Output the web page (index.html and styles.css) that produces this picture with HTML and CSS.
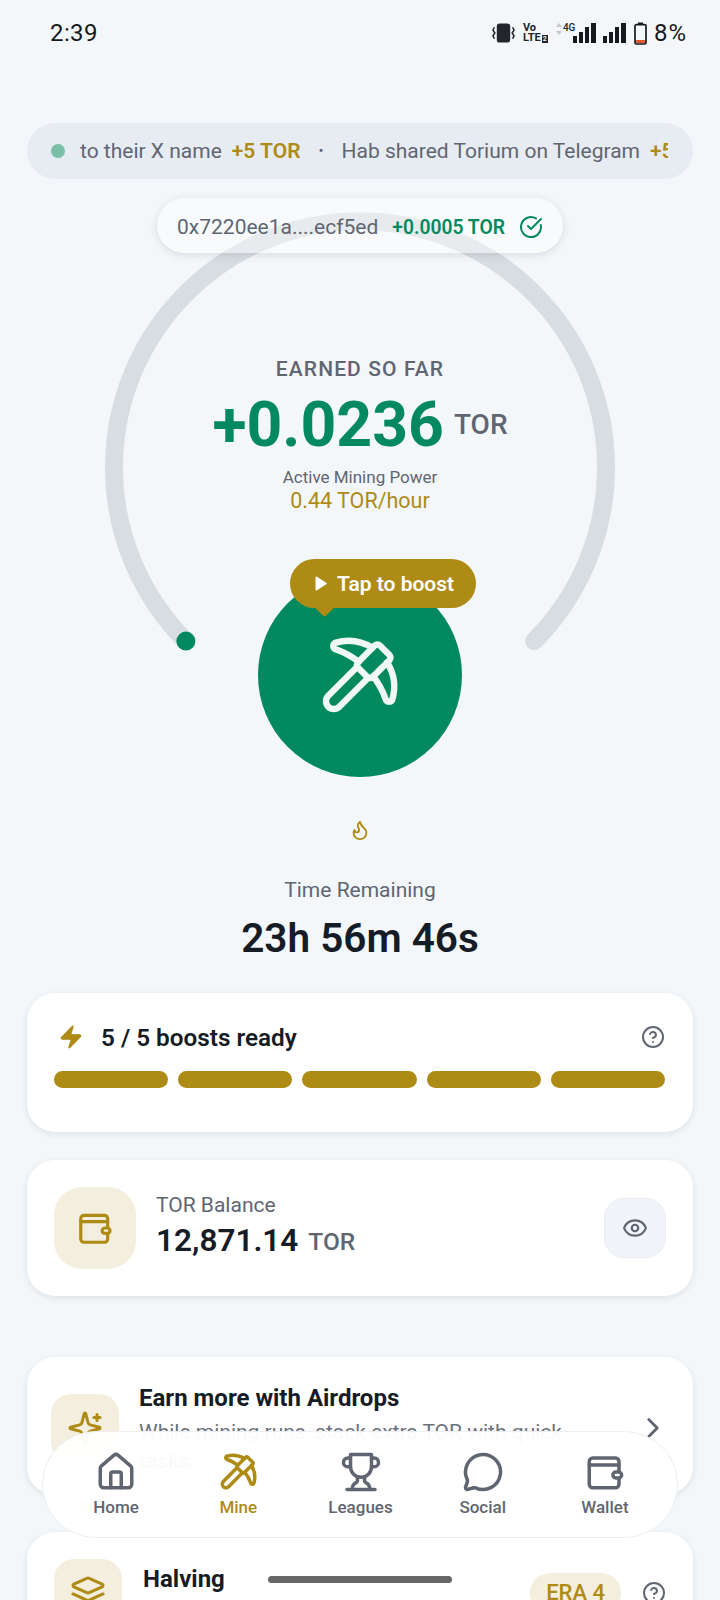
FILE: index.html
```html
<!DOCTYPE html>
<html lang="en">
<head>
    <meta charset="UTF-8">
    <meta name="viewport" content="width=device-width, initial-scale=1.0">
    <title>Mine</title>
    <link rel="stylesheet" href="styles.css">
</head>
<body>
    <div class="screen">
        <div class="status">
            <div class="time">2:39</div>
            <div class="status-icons">
                <svg class="ic-vibrate" viewBox="0 0 24 20" fill="none" stroke="#22262b" stroke-width="1.6">
                    <rect x="5" y="0" width="14" height="20" rx="3" fill="#22262b" stroke="none"/>
                    <path d="M2.5 4 1 7l2 3-2 3 1.5 3"/>
                    <path d="M21.5 4 23 7l-2 3 2 3-1.5 3"/>
                </svg>
                <div class="volte"><span>Vo</span><span>LTE<i>2</i></span></div>
                <div class="net">
                    <svg class="ic-arrows" viewBox="0 0 6 12" fill="#c5c9ce"><path d="M3 0l3 4H0z"/><path d="M3 12 0 8h6z"/></svg>
                    <span class="net-label">4G</span>
                    <svg class="ic-signal" viewBox="0 0 23 20" fill="#16191d"><rect x="0" y="13" width="4" height="7"/><rect x="6" y="9" width="4" height="11"/><rect x="12" y="4" width="4" height="16"/><rect x="18" y="0" width="5" height="20"/></svg>
                </div>
                <svg class="ic-signal second" viewBox="0 0 23 20" fill="#16191d"><rect x="0" y="13" width="4" height="7"/><rect x="6" y="9" width="4" height="11"/><rect x="12" y="4" width="4" height="16"/><rect x="18" y="0" width="5" height="20"/></svg>
                <svg class="ic-battery" viewBox="0 0 13 23" fill="none"><path d="M4 .5h5v2H4z" fill="#16191d"/><rect x="1" y="2.6" width="11" height="19.4" rx="1.5" stroke="#16191d" stroke-width="1.7"/><rect x="2" y="18" width="9" height="3" fill="#e4572e"/></svg>
                <div class="percent">8%</div>
            </div>
        </div>

        <div class="main">
            <div class="ticker">
                <span class="ticker-dot"></span>
                <div class="ticker-track">
                    <span>to their X name</span>
                    <b>+5 TOR</b>
                    <em>•</em>
                    <span>Hab shared Torium on Telegram</span>
                    <b>+5 TOR</b>
                </div>
            </div>

            <div class="hero">
                <svg class="arc" viewBox="0 0 510 510" fill="none">
                    <path d="M80.9 429.1A246 246 0 1 1 429.1 429.1" stroke="#d8dde1" stroke-width="18" stroke-linecap="round"/>
                    <circle cx="80.9" cy="429.1" r="9.5" fill="#028a5e"/>
                </svg>

                <div class="chip">
                    <span class="chip-addr">0x7220ee1a....ecf5ed</span>
                    <span class="chip-amt">+0.0005 TOR</span>
                    <svg class="chip-check" viewBox="0 0 24 24" fill="none" stroke="#028a5e" stroke-width="2" stroke-linecap="round" stroke-linejoin="round"><path d="M21.801 10A10 10 0 1 1 17 3.335"/><path d="m9 11 3 3L22 4"/></svg>
                </div>

                <div class="earned-label">EARNED SO FAR</div>
                <div class="earned-row">
                    <span class="earned-value">+0.0236</span>
                    <span class="earned-unit">TOR</span>
                </div>
                <div class="power-label">Active Mining Power</div>
                <div class="power-rate">0.44 TOR/hour</div>

                <div class="mine-btn">
                    <div class="boost-tip">
                        <svg class="boost-play" viewBox="0 0 24 24" fill="#fff" stroke="#fff" stroke-width="2" stroke-linejoin="round"><polygon points="6 3 20 12 6 21 6 3"/></svg>
                        <span>Tap to boost</span>
                    </div>
                    <svg class="mine-icon" viewBox="0 0 24 24" fill="none" stroke="#eff8f4" stroke-width="1.75" stroke-linecap="round" stroke-linejoin="round">
                        <path d="M14.531 12.469 6.619 20.38a1 1 0 1 1-3-3l7.912-7.912"/>
                        <path d="M15.686 4.314A12.5 12.5 0 0 0 5.461 2.958 1 1 0 0 0 5.58 4.71a22 22 0 0 1 6.318 3.393"/>
                        <path d="M17.7 3.7a1 1 0 0 0-1.4 0l-4.6 4.6a1 1 0 0 0 0 1.4l2.6 2.6a1 1 0 0 0 1.4 0l4.6-4.6a1 1 0 0 0 0-1.4z"/>
                        <path d="M19.686 8.314a12.501 12.501 0 0 1 1.356 10.225 1 1 0 0 1-1.751-.119 22 22 0 0 0-3.393-6.319"/>
                    </svg>
                </div>

                <svg class="flame" viewBox="0 0 24 24" fill="none" stroke="#ae8b14" stroke-width="2" stroke-linecap="round" stroke-linejoin="round"><path d="M8.5 14.5A2.5 2.5 0 0 0 11 12c0-1.38-.5-2-1-3-1.072-2.143-.224-4.054 2-6 .5 2.5 2 4.9 4 6.5 2 1.6 3 3.5 3 5.5a7 7 0 1 1-14 0c0-1.153.433-2.294 1-3a2.5 2.5 0 0 0 2.5 2.5z"/></svg>
                <div class="remain-label">Time Remaining</div>
                <div class="remain-value">23h 56m 46s</div>
            </div>

            <div class="card boosts">
                <div class="boosts-head">
                    <svg class="zap" viewBox="0 0 24 24" fill="#ae8b14" stroke="#ae8b14" stroke-width="1" stroke-linejoin="round"><path d="M4 14a1 1 0 0 1-.78-1.63l9.9-10.2a.5.5 0 0 1 .86.46l-1.92 6.02A1 1 0 0 0 13 10h7a1 1 0 0 1 .78 1.63l-9.9 10.2a.5.5 0 0 1-.86-.46l1.92-6.02A1 1 0 0 0 11 14z"/></svg>
                    <span class="boosts-title">5 / 5 boosts ready</span>
                    <svg class="help" viewBox="0 0 24 24" fill="none" stroke="#5f6672" stroke-width="2" stroke-linecap="round" stroke-linejoin="round"><circle cx="12" cy="12" r="10"/><path d="M9.09 9a3 3 0 0 1 5.83 1c0 2-3 3-3 3"/><path d="M12 17h.01"/></svg>
                </div>
                <div class="boost-bars">
                    <span></span><span></span><span></span><span></span><span></span>
                </div>
            </div>

            <div class="card balance">
                <div class="icon-box big">
                    <svg class="wallet-gold" viewBox="0 0 24 24" fill="none" stroke="#ae8b14" stroke-width="2" stroke-linecap="round" stroke-linejoin="round"><path d="M20 11V6a2 2 0 0 0-2-2H5a2 2 0 0 0-2 2v13a2 2 0 0 0 2 2h13a2 2 0 0 0 2-2v-3"/><path d="M3 8h17"/><rect x="16.5" y="12" width="5" height="3.4" rx="1.7"/></svg>
                </div>
                <div class="balance-text">
                    <div class="balance-label">TOR Balance</div>
                    <div class="balance-row"><span class="balance-value">12,871.14</span><span class="balance-unit">TOR</span></div>
                </div>
                <div class="eye-btn">
                    <svg class="eye" viewBox="0 0 24 24" fill="none" stroke="#5f6672" stroke-width="2" stroke-linecap="round" stroke-linejoin="round"><path d="M2.062 12.348a1 1 0 0 1 0-.696 10.75 10.75 0 0 1 19.876 0 1 1 0 0 1 0 .696 10.75 10.75 0 0 1-19.876 0"/><circle cx="12" cy="12" r="3"/></svg>
                </div>
            </div>

            <div class="card airdrops">
                <div class="icon-box">
                    <svg class="box-icon" viewBox="0 0 24 24" fill="none" stroke="#ae8b14" stroke-width="2" stroke-linecap="round" stroke-linejoin="round"><path d="M9.937 15.5A2 2 0 0 0 8.5 14.063l-6.135-1.582a.5.5 0 0 1 0-.962L8.5 9.936A2 2 0 0 0 9.937 8.5l1.582-6.135a.5.5 0 0 1 .963 0L14.063 8.5A2 2 0 0 0 15.5 9.937l6.135 1.581a.5.5 0 0 1 0 .964L15.5 14.063a2 2 0 0 0-1.437 1.437l-1.582 6.135a.5.5 0 0 1-.963 0z"/><path d="M20 3v4"/><path d="M22 5h-4"/></svg>
                </div>
                <div class="airdrops-text">
                    <div class="card-title">Earn more with Airdrops</div>
                    <div class="airdrops-sub">While mining runs, stack extra TOR with quick tasks.</div>
                </div>
                <svg class="chevron" viewBox="0 0 24 24" fill="none" stroke="#5f6672" stroke-width="2" stroke-linecap="round" stroke-linejoin="round"><path d="m9 18 6-6-6-6"/></svg>
            </div>

            <div class="card halving">
                <div class="icon-box">
                    <svg class="box-icon" viewBox="0 0 24 24" fill="none" stroke="#ae8b14" stroke-width="2" stroke-linecap="round" stroke-linejoin="round"><path d="m12.83 2.18a2 2 0 0 0-1.66 0L2.6 6.08a1 1 0 0 0 0 1.83l8.58 3.91a2 2 0 0 0 1.66 0l8.58-3.9a1 1 0 0 0 0-1.83Z"/><path d="m22 17.65-9.17 4.16a2 2 0 0 1-1.66 0L2 17.65"/><path d="m22 12.65-9.17 4.16a2 2 0 0 1-1.66 0L2 12.65"/></svg>
                </div>
                <div class="card-title halving-title">Halving</div>
                <div class="era">ERA 4</div>
                <svg class="help" viewBox="0 0 24 24" fill="none" stroke="#5f6672" stroke-width="2" stroke-linecap="round" stroke-linejoin="round"><circle cx="12" cy="12" r="10"/><path d="M9.09 9a3 3 0 0 1 5.83 1c0 2-3 3-3 3"/><path d="M12 17h.01"/></svg>
            </div>
        </div>

        <div class="nav">
            <div class="nav-item">
                <svg viewBox="0 0 24 24" fill="none" stroke="currentColor" stroke-width="2" stroke-linecap="round" stroke-linejoin="round"><path d="M15 21v-8a1 1 0 0 0-1-1h-4a1 1 0 0 0-1 1v8"/><path d="M3 10a2 2 0 0 1 .709-1.528l7-5.999a2 2 0 0 1 2.582 0l7 5.999A2 2 0 0 1 21 10v9a2 2 0 0 1-2 2H5a2 2 0 0 1-2-2z"/></svg>
                <span>Home</span>
            </div>
            <div class="nav-item active">
                <svg viewBox="0 0 24 24" fill="none" stroke="currentColor" stroke-width="2" stroke-linecap="round" stroke-linejoin="round"><path d="M14.531 12.469 6.619 20.38a1 1 0 1 1-3-3l7.912-7.912"/><path d="M15.686 4.314A12.5 12.5 0 0 0 5.461 2.958 1 1 0 0 0 5.58 4.71a22 22 0 0 1 6.318 3.393"/><path d="M17.7 3.7a1 1 0 0 0-1.4 0l-4.6 4.6a1 1 0 0 0 0 1.4l2.6 2.6a1 1 0 0 0 1.4 0l4.6-4.6a1 1 0 0 0 0-1.4z"/><path d="M19.686 8.314a12.501 12.501 0 0 1 1.356 10.225 1 1 0 0 1-1.751-.119 22 22 0 0 0-3.393-6.319"/></svg>
                <span>Mine</span>
            </div>
            <div class="nav-item">
                <svg viewBox="0 0 24 24" fill="none" stroke="currentColor" stroke-width="2" stroke-linecap="round" stroke-linejoin="round"><path d="M6 9H4.5a2.5 2.5 0 0 1 0-5H6"/><path d="M18 9h1.5a2.5 2.5 0 0 0 0-5H18"/><path d="M4 22h16"/><path d="M10 14.66V17c0 .55-.47.98-.97 1.21C7.85 18.75 7 20.24 7 22"/><path d="M14 14.66V17c0 .55.47.98.97 1.21C16.15 18.75 17 20.24 17 22"/><path d="M18 2H6v7a6 6 0 0 0 12 0V2Z"/></svg>
                <span>Leagues</span>
            </div>
            <div class="nav-item">
                <svg viewBox="0 0 24 24" fill="none" stroke="currentColor" stroke-width="2" stroke-linecap="round" stroke-linejoin="round"><path d="M2.992 16.342a2 2 0 0 1 .094 1.167l-1.065 3.29a1 1 0 0 0 1.236 1.168l3.413-.998a2 2 0 0 1 1.099.092 10 10 0 1 0-4.777-4.719"/></svg>
                <span>Social</span>
            </div>
            <div class="nav-item">
                <svg viewBox="0 0 24 24" fill="none" stroke="currentColor" stroke-width="2" stroke-linecap="round" stroke-linejoin="round"><path d="M20 11V6a2 2 0 0 0-2-2H5a2 2 0 0 0-2 2v13a2 2 0 0 0 2 2h13a2 2 0 0 0 2-2v-3"/><path d="M3 8h17"/><rect x="16.5" y="12" width="5" height="3.4" rx="1.7"/></svg>
                <span>Wallet</span>
            </div>
        </div>

        <div class="home-bar"></div>
    </div>
</body>
</html>
```

FILE: styles.css
```css
body{
    margin: 0;
    padding: 0;
    background-color: #f3f7fa;
    font-family: Roboto, "Liberation Sans", sans-serif;
}
.screen{
    position: relative;
    width: 720px;
    height: 1600px;
    overflow: hidden;
    background-color: #f3f7fa;
}

/* status bar */
.status{
    display: flex;
    justify-content: space-between;
    align-items: center;
    height: 66px;
    padding: 0 33px 0 50px;
}
.time{
    font-size: 24px;
    color: #16191d;
    letter-spacing: 0.4px;
}
.status-icons{
    display: flex;
    align-items: center;
}
.ic-vibrate{
    width: 23px;
    height: 20px;
}
.volte{
    display: flex;
    flex-direction: column;
    margin-left: 8px;
    font-size: 11px;
    font-weight: 700;
    line-height: 10px;
    color: #22262b;
    width: 25px;
}
.volte i{
    font-style: normal;
    font-size: 7px;
    margin-left: 1px;
    padding: 0 1px;
    background-color: #22262b;
    color: #f3f7fa;
}
.net{
    display: flex;
    align-items: flex-start;
    margin-left: 8px;
    height: 20px;
}
.ic-arrows{
    width: 6px;
    height: 12px;
}
.net-label{
    font-size: 10px;
    font-weight: 500;
    line-height: 9px;
    color: #22262b;
    margin-left: 1px;
    width: 10px;
}
.ic-signal{
    width: 23px;
    height: 20px;
}
.second{
    margin-left: 7px;
}
.ic-battery{
    width: 13px;
    height: 23px;
    margin-left: 8px;
}
.percent{
    font-size: 24px;
    color: #16191d;
    margin-left: 7px;
    letter-spacing: 1px;
}

.main{
    padding: 0 27px;
}

/* activity ticker */
.ticker{
    display: flex;
    align-items: center;
    height: 56px;
    margin-top: 57px;
    padding: 0 25px 0 24px;
    border-radius: 28px;
    background-color: #e7ebf2;
}
.ticker-dot{
    flex: none;
    width: 14px;
    height: 14px;
    border-radius: 50%;
    background-color: #7abfa8;
}
.ticker-track{
    flex: 1;
    display: flex;
    align-items: center;
    gap: 10px;
    margin-left: 15px;
    overflow: hidden;
    white-space: nowrap;
    font-size: 21px;
    color: #5f6672;
}
.ticker-track b{
    font-weight: 600;
    color: #ae8b14;
}
.ticker-track em{
    font-style: normal;
    font-size: 15px;
    margin: 0 8px;
}

/* mining gauge */
.hero{
    position: relative;
    display: flex;
    flex-direction: column;
    align-items: center;
    margin-top: 19px;
}
.arc{
    position: absolute;
    top: 14px;
    left: 78px;
    width: 510px;
    height: 510px;
}
.chip{
    position: relative;
    display: flex;
    align-items: center;
    box-sizing: border-box;
    height: 55px;
    padding: 2px 20px 0;
    border-radius: 28px;
    background-color: rgba(255, 255, 255, 0.42);
    box-shadow: 0 2px 8px rgba(30, 40, 60, 0.13);
}
.chip-addr{
    font-size: 21px;
    color: #5f6672;
}
.chip-amt{
    margin: 2px 0 0 14px;
    font-size: 19.3px;
    font-weight: 600;
    color: #028a5e;
}
.chip-check{
    width: 24px;
    height: 24px;
    margin-left: 14px;
}
.earned-label{
    position: relative;
    margin-top: 102px;
    font-size: 21px;
    font-weight: 500;
    line-height: 28px;
    letter-spacing: 1.1px;
    color: #5f6672;
}
.earned-row{
    position: relative;
    display: flex;
    align-items: center;
    gap: 10px;
    height: 64px;
    margin-top: 10px;
    line-height: 64px;
}
.earned-value{
    font-size: 62.5px;
    font-weight: 700;
    color: #028a5e;
}
.earned-unit{
    font-size: 28px;
    font-weight: 500;
    color: #5f6672;
}
.power-label{
    position: relative;
    margin-top: 9px;
    font-size: 17px;
    line-height: 22px;
    color: #5f6672;
}
.power-rate{
    position: relative;
    font-size: 21.5px;
    line-height: 26px;
    color: #ae8b14;
}
.mine-btn{
    position: relative;
    display: flex;
    align-items: center;
    justify-content: center;
    width: 204px;
    height: 204px;
    margin-top: 59px;
    border-radius: 50%;
    background-color: #028a5e;
}
.mine-icon{
    width: 88px;
    height: 88px;
    margin: 2px 3px 0 0;
}
.boost-tip{
    position: absolute;
    top: -14px;
    left: 32px;
    display: flex;
    align-items: center;
    gap: 8px;
    height: 49px;
    padding: 0 22px;
    border-radius: 25px;
    background-color: #ae8b14;
    color: #fff;
    font-size: 21px;
    font-weight: 600;
    white-space: nowrap;
}
.boost-tip::after{
    content: "";
    position: absolute;
    left: 27px;
    bottom: -6px;
    width: 15px;
    height: 15px;
    background-color: #ae8b14;
    border-radius: 2px;
    transform: rotate(45deg);
}
.boost-play{
    width: 17px;
    height: 17px;
}
.flame{
    width: 22px;
    height: 22px;
    margin-top: 42px;
}
.remain-label{
    margin-top: 35px;
    font-size: 21px;
    line-height: 28px;
    color: #5f6672;
}
.remain-value{
    margin-top: 9px;
    font-size: 40.5px;
    font-weight: 600;
    line-height: 50px;
    color: #151c25;
}

/* cards */
.card{
    background-color: #fff;
    border-radius: 28px;
    box-shadow: 0 2px 6px rgba(30, 40, 60, 0.1);
}
.icon-box{
    flex: none;
    display: flex;
    align-items: center;
    justify-content: center;
    width: 68px;
    height: 68px;
    border-radius: 20px;
    background-color: #f3eedd;
}
.icon-box.big{
    width: 82px;
    height: 82px;
    border-radius: 28px;
}
.box-icon{
    width: 36px;
    height: 36px;
}
.card-title{
    font-size: 24px;
    font-weight: 700;
    line-height: 32px;
    color: #151c25;
}
.help{
    flex: none;
    width: 24px;
    height: 24px;
}

.boosts{
    margin-top: 30px;
    padding: 28px 28px 44px 27px;
}
.boosts-head{
    display: flex;
    align-items: center;
    height: 32px;
}
.zap{
    width: 26px;
    height: 26px;
    margin-left: 4px;
}
.boosts-title{
    flex: 1;
    margin-left: 17px;
    font-size: 24.3px;
    font-weight: 600;
    color: #151c25;
}
.boost-bars{
    display: flex;
    gap: 10px;
    margin-top: 18px;
}
.boost-bars span{
    flex: 1;
    height: 17px;
    border-radius: 9px;
    background-color: #ae8b14;
}

.balance{
    display: flex;
    align-items: center;
    margin-top: 28px;
    padding: 27px;
}
.wallet-gold{
    width: 38px;
    height: 38px;
}
.balance-text{
    flex: 1;
    margin-left: 20px;
    padding-bottom: 4px;
}
.balance-label{
    font-size: 21px;
    line-height: 28px;
    color: #5f6672;
}
.balance-row{
    display: flex;
    align-items: center;
    gap: 10px;
    height: 40px;
    margin-top: 2px;
}
.balance-value{
    font-size: 31.5px;
    font-weight: 600;
    line-height: 40px;
    color: #151c25;
}
.balance-unit{
    font-size: 24.5px;
    font-weight: 500;
    color: #5f6672;
}
.eye-btn{
    display: flex;
    align-items: center;
    justify-content: center;
    width: 60px;
    height: 58px;
    border: 1px solid #e9edf2;
    border-radius: 20px;
    background-color: #f1f4f8;
}
.eye{
    width: 26px;
    height: 26px;
}

.airdrops{
    display: flex;
    align-items: center;
    height: 138px;
    margin-top: 61px;
    padding: 4px 27px 0 24px;
    box-sizing: border-box;
}
.airdrops-text{
    flex: 1;
    margin-left: 20px;
    padding: 2px 50px 0 0;
}
.airdrops-sub{
    margin-top: 4px;
    font-size: 21px;
    line-height: 29px;
    color: #6a7280;
}
.chevron{
    flex: none;
    width: 34px;
    height: 34px;
    margin-right: -4px;
}

.halving{
    display: flex;
    align-items: flex-start;
    height: 120px;
    margin-top: 37px;
    padding: 27px;
    box-sizing: border-box;
}
.halving-title{
    flex: 1;
    margin: 4px 0 0 21px;
}
.era{
    margin-top: 14px;
    padding: 0 16px;
    line-height: 40px;
    border-radius: 20px;
    background-color: #f3eedd;
    color: #ae8b14;
    font-size: 22px;
    font-weight: 500;
}
.halving .help{
    margin: 22px 0 0 21px;
}

/* floating nav */
.nav{
    position: absolute;
    left: 42px;
    top: 1431px;
    box-sizing: border-box;
    display: flex;
    width: 636px;
    height: 107px;
    padding: 0 11px 0 12px;
    border: 1px solid #eceef1;
    border-radius: 54px;
    background-color: rgba(255, 255, 255, 0.96);
}
.nav-item{
    flex: 1;
    display: flex;
    flex-direction: column;
    align-items: center;
    padding-top: 19px;
    color: #5f6672;
    font-size: 17px;
    font-weight: 500;
}
.nav-item svg{
    width: 42px;
    height: 42px;
}
.nav-item span{
    margin-top: 3px;
    line-height: 22px;
}
.nav-item.active{
    color: #ae8b14;
}
.home-bar{
    position: absolute;
    left: 268px;
    top: 1576px;
    width: 184px;
    height: 7px;
    border-radius: 4px;
    background-color: #666;
}
```
